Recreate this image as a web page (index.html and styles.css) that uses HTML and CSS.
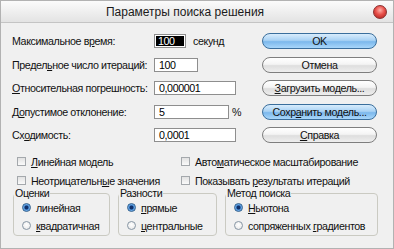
FILE: index.html
```html
<!DOCTYPE html>
<html lang="ru">
<head>
    <meta charset="UTF-8">
    <title>Параметры поиска решения</title>
    <link rel="stylesheet" href="styles.css">
</head>
<body>
    <div class="window">
        <div class="titlebar">
            <span class="title">Параметры поиска решения</span>
            <span class="close"></span>
        </div>

        <div class="client">
            <div class="top">
                <div class="fields">
                    <span class="label">Максимальное в<u>р</u>емя:</span>
                    <span class="field">
                        <span class="input sel"><span class="hl">100</span></span>
                        <span class="unit">секунд</span>
                    </span>

                    <span class="label">Предел<u>ь</u>ное число итераций:</span>
                    <span class="field"><span class="input w44">100</span></span>

                    <span class="label"><u>О</u>тносительная погрешность:</span>
                    <span class="field"><span class="input w82">0,000001</span></span>

                    <span class="label">Д<u>о</u>пустимое отклонение:</span>
                    <span class="field">
                        <span class="input w75">5</span>
                        <span class="pct">%</span>
                    </span>

                    <span class="label">Сх<u>о</u>димость:</span>
                    <span class="field"><span class="input w82">0,0001</span></span>
                </div>

                <div class="buttons">
                    <span class="btn blue">OK</span>
                    <span class="btn">Отмена</span>
                    <span class="btn"><u>З</u>агрузить модель...</span>
                    <span class="btn blue">Сохр<u>а</u>нить модель...</span>
                    <span class="btn"><u>С</u>правка</span>
                </div>
            </div>

            <div class="checks">
                <span class="check"><span class="box"></span><span><u>Л</u>инейная модель</span></span>
                <span class="check"><span class="box"></span><span>Авто<u>м</u>атическое масштабирование</span></span>
                <span class="check"><span class="box"></span><span>Неотрицательн<u>ы</u>е значения</span></span>
                <span class="check"><span class="box"></span><span>Показывать <u>р</u>езультаты итераций</span></span>
            </div>

            <div class="groups">
                <fieldset>
                    <legend>Оценки</legend>
                    <span class="opt"><span class="radio on"></span><span>линейная</span></span>
                    <span class="opt"><span class="radio"></span><span><u>к</u>вадратичная</span></span>
                </fieldset>
                <fieldset>
                    <legend>Разности</legend>
                    <span class="opt"><span class="radio on"></span><span><u>п</u>рямые</span></span>
                    <span class="opt"><span class="radio"></span><span><u>ц</u>ентральные</span></span>
                </fieldset>
                <fieldset>
                    <legend>Метод поиска</legend>
                    <span class="opt"><span class="radio on"></span><span><u>Н</u>ьютона</span></span>
                    <span class="opt"><span class="radio"></span><span>сопряженных <u>г</u>радиентов</span></span>
                </fieldset>
            </div>
        </div>
    </div>
</body>
</html>
```

FILE: styles.css
```css
html, body { margin: 0; }
body {
    background: #ececec;
    font-family: "Liberation Sans", Arial, sans-serif;
    font-size: 10.7px;
    letter-spacing: -0.4px;
    color: #111;
}
u { text-decoration: underline; text-underline-offset: 1px; }

.window {
    width: 394px;
    height: 249px;
    box-sizing: border-box;
    border: 1px solid #b2b2b2;
    background: #f0f0f0;
}

/* title bar */
.titlebar {
    height: 21px;
    display: flex;
    align-items: center;
    padding: 0 6px 0 6px;
    border-bottom: 1px solid #c4c4c4;
    background: linear-gradient(#fbfbfb, #e3e3e3);
}
.title {
    flex: 1;
    padding-right: 10px;
    text-align: center;
    font-size: 12px;
    letter-spacing: 0;
    color: #1a1a1a;
}
.close {
    width: 12px;
    height: 12px;
    border-radius: 50%;
    border: 1px solid #8a3030;
    background: radial-gradient(circle at 50% 35%, #ffb0a8 0, #e8504a 45%, #a81c18 100%);
}

/* client */
.client { padding: 10px 16px 0 11px; }
.top { display: flex; justify-content: space-between; }

.fields {
    display: grid;
    grid-template-columns: 142px auto;
    grid-auto-rows: 16px;
    row-gap: 7.5px;
    align-items: center;
}
.label { white-space: nowrap; }
.field { display: flex; align-items: center; }
.input {
    box-sizing: border-box;
    height: 14px;
    line-height: 12px;
    padding: 0 4px;
    border: 1px solid #8e8e8e;
    background: #fff;
    color: #000;
}
.input.sel { width: 32px; padding: 1px; }
.hl { display: block; height: 10px; line-height: 10px; background: #000; color: #fff; padding-left: 2px; }
.w44 { width: 44px; }
.w75 { width: 75px; }
.w82 { width: 82px; }
.unit { margin-left: 7px; }
.pct { margin-left: 3px; }

.buttons { display: flex; flex-direction: column; gap: 7.5px; width: 115px; }
.btn {
    box-sizing: border-box;
    height: 16px;
    line-height: 14px;
    text-align: center;
    white-space: nowrap;
    border-radius: 8px;
    border: 1px solid #7e7e7e;
    background: linear-gradient(#ffffff 0%, #f4f4f4 45%, #dedede 55%, #eeeeee 100%);
    color: #111;
}
.btn.blue {
    border-color: #3a6e9c;
    background: linear-gradient(#d8ecfc 0%, #a9d2f4 45%, #7cb8ec 55%, #a8d6fa 100%);
}

/* checkboxes */
.checks {
    display: grid;
    grid-template-columns: 164px auto;
    row-gap: 6px;
    margin-top: 12px;
    padding-left: 5px;
}
.check { display: flex; align-items: center; height: 13px; white-space: nowrap; }
.box {
    flex-shrink: 0;
    width: 9px;
    height: 9px;
    box-sizing: border-box;
    margin-right: 5px;
    border: 1px solid #a4a8ac;
    background: linear-gradient(#e2e2e2, #fafafa);
}

/* option groups */
.groups {
    display: grid;
    grid-template-columns: 97px 99px 153px;
    column-gap: 8px;
    margin-left: 1px;
}
fieldset {
    margin: 0;
    min-width: 0;
    padding: 2px 8px 3px 8px;
    border: 1px solid #cacac2;
    border-radius: 4px;
    display: flex;
    flex-direction: column;
    gap: 5px;
}
legend { padding: 0 1px; margin-left: -8px; line-height: 12px; }
.opt { display: flex; align-items: center; height: 13px; white-space: nowrap; }
.radio {
    flex-shrink: 0;
    width: 9px;
    height: 9px;
    box-sizing: border-box;
    margin-right: 5px;
    border-radius: 50%;
    border: 1px solid #8796a4;
    background: radial-gradient(circle at 50% 40%, #ffffff 0, #e4e4e4 100%);
}
.radio.on {
    border-color: #2f5f8e;
    background: radial-gradient(circle, #10306a 0, #10306a 1.5px, #4f96df 2.5px, #b4dafa 100%);
}
```
